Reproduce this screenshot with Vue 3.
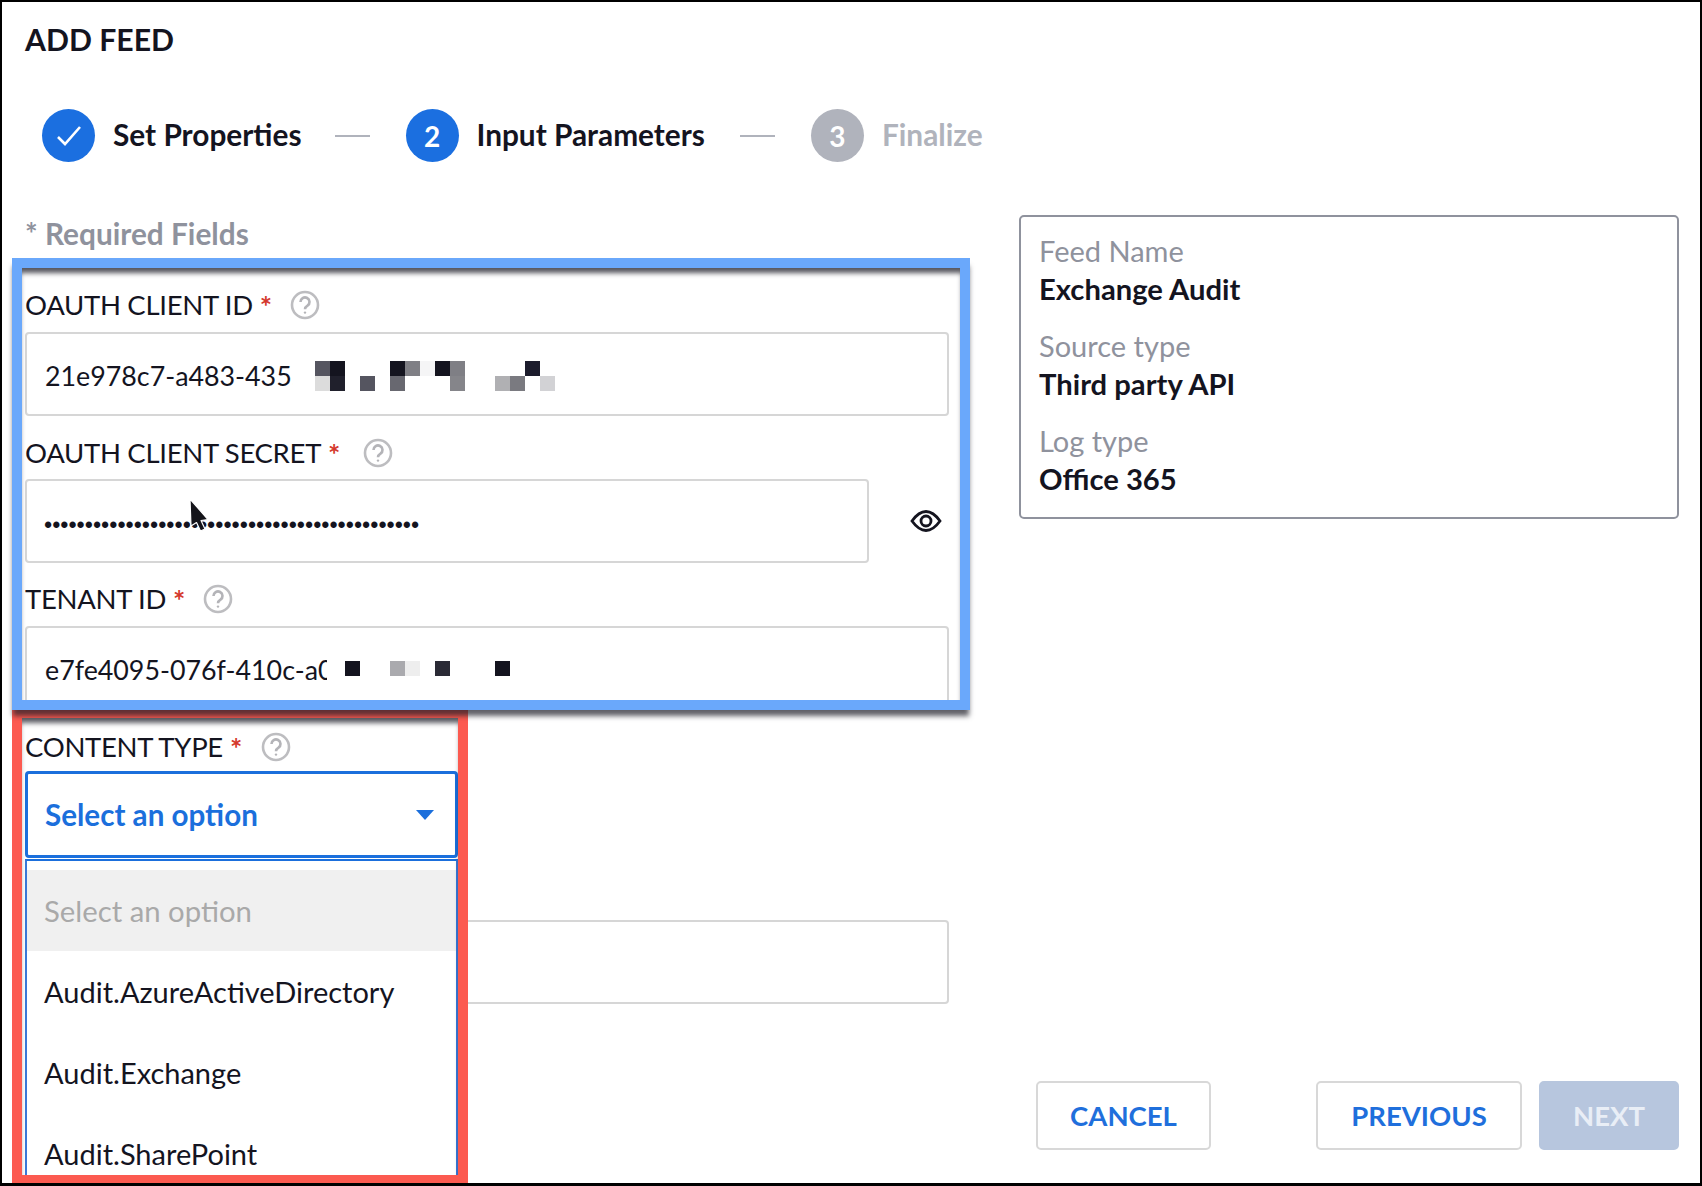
<script setup>
const clientCells = [
  [1,1,'#555560'],[2,1,'#14141f'],[6,1,'#14141f'],[7,1,'#7f7f85'],[8,1,'#f5f5f6'],[9,1,'#14141f'],[10,1,'#7f7f85'],[15,1,'#1c1c2c'],
  [1,2,'#dcdcdc'],[2,2,'#20202c'],[4,2,'#555560'],[6,2,'#686870'],[10,2,'#85858a'],[13,2,'#b0b0b3'],[14,2,'#7a7a80'],[16,2,'#d2d2d5']
]
const tenantCells = [
  [1,1,'#14141f'],[4,1,'#aaaaae'],[5,1,'#eeeeee'],[7,1,'#2a2a35'],[11,1,'#14141f']
]
const cellStyle = (c) => ({ gridColumn: c[0], gridRow: c[1], background: c[2] })
const summary = [
  ['Feed Name', 'Exchange Audit'],
  ['Source type', 'Third party API'],
  ['Log type', 'Office 365']
]
</script>

<template>
  <div class="page">
    <h1 class="title">ADD FEED</h1>

    <div class="steps">
      <div class="step first">
        <span class="dot active">
          <svg width="28" height="24" viewBox="0 0 28 24"><path d="M3 13l7 7L25 3" fill="none" stroke="#fff" stroke-width="2.6"/></svg>
        </span>
        <span class="step-label">Set Properties</span>
      </div>
      <span class="dash"></span>
      <div class="step">
        <span class="dot active">2</span>
        <span class="step-label">Input Parameters</span>
      </div>
      <span class="dash"></span>
      <div class="step">
        <span class="dot muted">3</span>
        <span class="step-label muted-text">Finalize</span>
      </div>
    </div>

    <div class="main">
      <div class="form">
        <div class="required">* Required Fields</div>

        <div class="field f1">
          <div class="label">
            OAUTH CLIENT ID<i>*</i>
            <svg class="help h1" width="30" height="30" viewBox="0 0 30 30"><circle cx="15" cy="15" r="13" /><path d="M10.5 12a4.5 4.5 0 1 1 7 3.7c-1.6 1-2.5 1.8-2.5 3.6" /><circle class="qdot" cx="15" cy="22.6" r="1.2" /></svg>
          </div>
          <div class="input">
            <span class="val v1">21e978c7-a483-4355</span>
            <span class="mosaic m1"><b v-for="(c, i) in clientCells" :key="i" :style="cellStyle(c)"></b></span>
          </div>
        </div>

        <div class="field f2">
          <div class="label">
            OAUTH CLIENT SECRET<i>*</i>
            <svg class="help h2" width="30" height="30" viewBox="0 0 30 30"><circle cx="15" cy="15" r="13" /><path d="M10.5 12a4.5 4.5 0 1 1 7 3.7c-1.6 1-2.5 1.8-2.5 3.6" /><circle class="qdot" cx="15" cy="22.6" r="1.2" /></svg>
          </div>
          <div class="secret-row">
            <div class="input secret"><span class="dots">••••••••••••••••••••••••••••••••••••••••••••••</span></div>
            <svg class="eye" width="32" height="24" viewBox="0 0 32 24">
              <path d="M2 12C7 5 11 2.5 16 2.5S25 5 30 12c-5 7-9 9.500-14 9.500S7 19 2 12z" fill="none" stroke="#14141f" stroke-width="2.8"/>
              <circle cx="16" cy="12" r="5" fill="none" stroke="#14141f" stroke-width="2.8"/>
            </svg>
          </div>
        </div>

        <div class="field f3">
          <div class="label">
            TENANT ID<i>*</i>
            <svg class="help h1" width="30" height="30" viewBox="0 0 30 30"><circle cx="15" cy="15" r="13" /><path d="M10.5 12a4.5 4.5 0 1 1 7 3.7c-1.6 1-2.5 1.8-2.5 3.6" /><circle class="qdot" cx="15" cy="22.6" r="1.2" /></svg>
          </div>
          <div class="input">
            <span class="val v2">e7fe4095-076f-410c-a0</span>
            <span class="mosaic m2"><b v-for="(c, i) in tenantCells" :key="i" :style="cellStyle(c)"></b></span>
          </div>
        </div>

        <div class="field f4">
          <div class="label">
            CONTENT TYPE<i>*</i>
            <svg class="help" width="30" height="30" viewBox="0 0 30 30"><circle cx="15" cy="15" r="13" /><path d="M10.5 12a4.5 4.5 0 1 1 7 3.7c-1.6 1-2.5 1.8-2.5 3.6" /><circle class="qdot" cx="15" cy="22.6" r="1.2" /></svg>
          </div>
          <div class="select-wrap">
            <div class="select">
              <span>Select an option</span>
              <span class="caret"></span>
            </div>
            <div class="menu">
              <div class="opt placeholder">Select an option</div>
              <div class="opt">Audit.AzureActiveDirectory</div>
              <div class="opt">Audit.Exchange</div>
              <div class="opt">Audit.SharePoint</div>
            </div>
          </div>
        </div>

        <div class="input hidden-input"></div>
      </div>

      <aside class="side">
        <div class="card">
          <div v-for="row in summary" :key="row[0]" class="card-row">
            <div class="k">{{ row[0] }}</div>
            <div class="v">{{ row[1] }}</div>
          </div>
        </div>
        <div class="actions">
          <button class="btn cancel">CANCEL</button>
          <button class="btn prev">PREVIOUS</button>
          <button class="btn next">NEXT</button>
        </div>
      </aside>
    </div>

    <div class="hl red"></div>
    <div class="hl blue"></div>
    <svg class="cursor" width="30" height="42" viewBox="0 0 30 42">
      <path d="M3 2L21 22.500L14 23.500L18 32L13.500 34L9.500 25.500L4 29Z" fill="#14141a" stroke="#fff" stroke-width="1.2" stroke-linejoin="round"/>
    </svg>
  </div>
</template>

<style>
body { margin: 0; background: #fff; }
</style>

<style scoped>
* { box-sizing: border-box; }
.page {
  position: relative;
  width: 1702px;
  height: 1186px;
  overflow: hidden;
  background: #fff;
  border-style: solid;
  border-color: #000;
  border-width: 2px 2px 3px 2px;
  font-family: "Lato", "Noto Sans", sans-serif;
  color: #14141f;
  font-size: 30px;
}
.title {
  margin: 0;
  height: 76px;
  padding: 17px 0 0 23px;
  font-size: 30.2px;
  line-height: 40px;
  font-weight: 700;
}
.steps {
  display: flex;
  align-items: center;
  height: 53px;
  margin-top: 31px;
  padding-left: 40px;
}
.step { display: flex; align-items: center; gap: 18px; }
.step.first { margin-right: -2px; }
.dot {
  width: 53px;
  height: 53px;
  border-radius: 50%;
  display: flex;
  align-items: center;
  justify-content: center;
  color: #fff;
  font-weight: 700;
  font-size: 28px;
}
.dot.active { background: #1b6fe0; }
.dot.muted { background: #b0b3bc; }
.step-label { font-weight: 700; font-size: 29.8px; line-height: 40px; margin-top: -1px; }
.muted-text { color: #b0b3bc; }
.dash { width: 35px; height: 2px; background: #b0b3bc; margin: 0 35.5px; }
.main {
  display: flex;
  height: 1022px;
}
.form { width: 924px; margin-left: 23px; }
.required {
  height: 36px;
  margin-top: 54px;
  font-weight: 700;
  line-height: 36px;
  font-size: 29.8px;
  color: #8f929d;
}
.field { display: block; }
.f1 { margin-top: 33px; }
.f2 { margin-top: 17px; }
.f3 { margin-top: 16px; }
.f4 { margin-top: 17px; }
.label {
  height: 40px;
  line-height: 40px;
  font-size: 27.5px;
  letter-spacing: -0.3px;
  display: flex;
  align-items: center;
  margin-bottom: 7px;
  white-space: nowrap;
}
.f2 .label { margin-bottom: 6px; }
.f4 .label { margin-bottom: 4px; }
.label i {
  color: #d4382c;
  font-style: normal;
  font-weight: 700;
  font-size: 29px;
  margin: 2px 0 0 7px;
  line-height: 30px;
}
.help { margin-left: 19px; flex: none; }
.help.h1 { margin-left: 18px; }
.help.h2 { margin-left: 23px; }
.help circle, .help path { fill: none; stroke: #bdbdc0; stroke-width: 2.6; }
.help path { stroke: #b4b4b8; }
.help .qdot { fill: #b4b4b8; stroke: none; }
.input {
  height: 84px;
  border: 2px solid #d6d6d6;
  border-radius: 4px;
  display: flex;
  align-items: center;
  padding-left: 18px;
  background: #fff;
}
.val { overflow: hidden; white-space: nowrap; font-size: 26.8px; line-height: 40px; margin-top: 3px; }
.v1 { width: 248px; }
.v2 { width: 282px; }
.mosaic { display: grid; grid-template-columns: repeat(16, 15px); grid-auto-rows: 15px; }
.m1 { margin-left: 22px; margin-top: 3px; }
.m2 { margin-left: 18px; margin-top: 0; grid-template-columns: repeat(11, 15px); }
.secret-row { display: flex; align-items: center; }
.secret { width: 844px; }
.dots {
  font-family: "Liberation Sans", sans-serif;
  font-size: 23.3px;
  margin-top: 8px;
  margin-left: -1px;
  white-space: nowrap;
}
.eye { margin-left: 41px; }
.select-wrap { position: relative; width: 433px; }
.select {
  height: 87px;
  border: 3px solid #1b6fdc;
  border-radius: 4px;
  display: flex;
  align-items: center;
  justify-content: space-between;
  padding: 0 21px 0 17px;
  color: #1b6fdc;
  font-weight: 700;
  font-size: 29.6px;
}
.caret {
  width: 0;
  height: 0;
  border-left: 9.500px solid transparent;
  border-right: 9.500px solid transparent;
  border-top: 10px solid #1b6fdc;
}
.menu {
  position: absolute;
  left: 0;
  right: 0;
  top: 88px;
  height: 400px;
  padding-top: 9px;
  background: #fff;
  border-left: 2px solid #3a78d8;
  border-right: 2px solid #3a78d8;
  border-top: 2px solid #1b6fdc;
  z-index: 2;
}
.opt {
  height: 81px;
  display: flex;
  align-items: center;
  padding-left: 17px;
  font-size: 29px;
}
.placeholder { background: #f0f0f0; color: #a9a9a9; font-size: 29.3px; }
.hidden-input { margin-top: 62px; }
.side {
  width: 660px;
  margin-left: 70px;
  display: flex;
  flex-direction: column;
}
.card {
  margin-top: 53px;
  height: 304px;
  border: 2px solid #8f929d;
  border-radius: 5px;
  padding: 15px 18px;
}
.card-row { height: 95px; }
.k { color: #8f929d; font-size: 29px; line-height: 38px; }
.v { font-weight: 700; font-size: 29.2px; line-height: 38px; }
.actions { display: flex; margin-top: 562px; }
.btn {
  height: 69px;
  border-radius: 5px;
  font-family: inherit;
  font-size: 27.5px;
  font-weight: 700;
  border: 2px solid #d8d8d8;
  background: #fff;
  color: #1f6fdc;
  padding: 0;
}
.cancel { width: 175px; margin-left: 17px; }
.prev { width: 206px; margin-left: 105px; }
.next { width: 140px; margin-left: 17px; background: #b7c6de; border-color: #b7c6de; color: #e9eef6; }
.hl {
  position: absolute;
  border-style: solid;
  pointer-events: none;
}
.blue {
  left: 10px;
  top: 256px;
  width: 958px;
  height: 452px;
  border: 10px solid #6aa8fb;
  box-shadow: 0 7px 5px -1px rgba(30,30,40,0.7), inset 0 7px 5px -2px rgba(30,30,40,0.75);
  z-index: 4;
}
.red {
  left: 10px;
  top: 706px;
  width: 456px;
  height: 477px;
  border: 10px solid #fc5a50;
  box-shadow: inset 0 7px 5px -2px rgba(30,30,40,0.7);
  z-index: 3;
}
.cursor { position: absolute; left: 185px; top: 495px; z-index: 5; }
</style>
